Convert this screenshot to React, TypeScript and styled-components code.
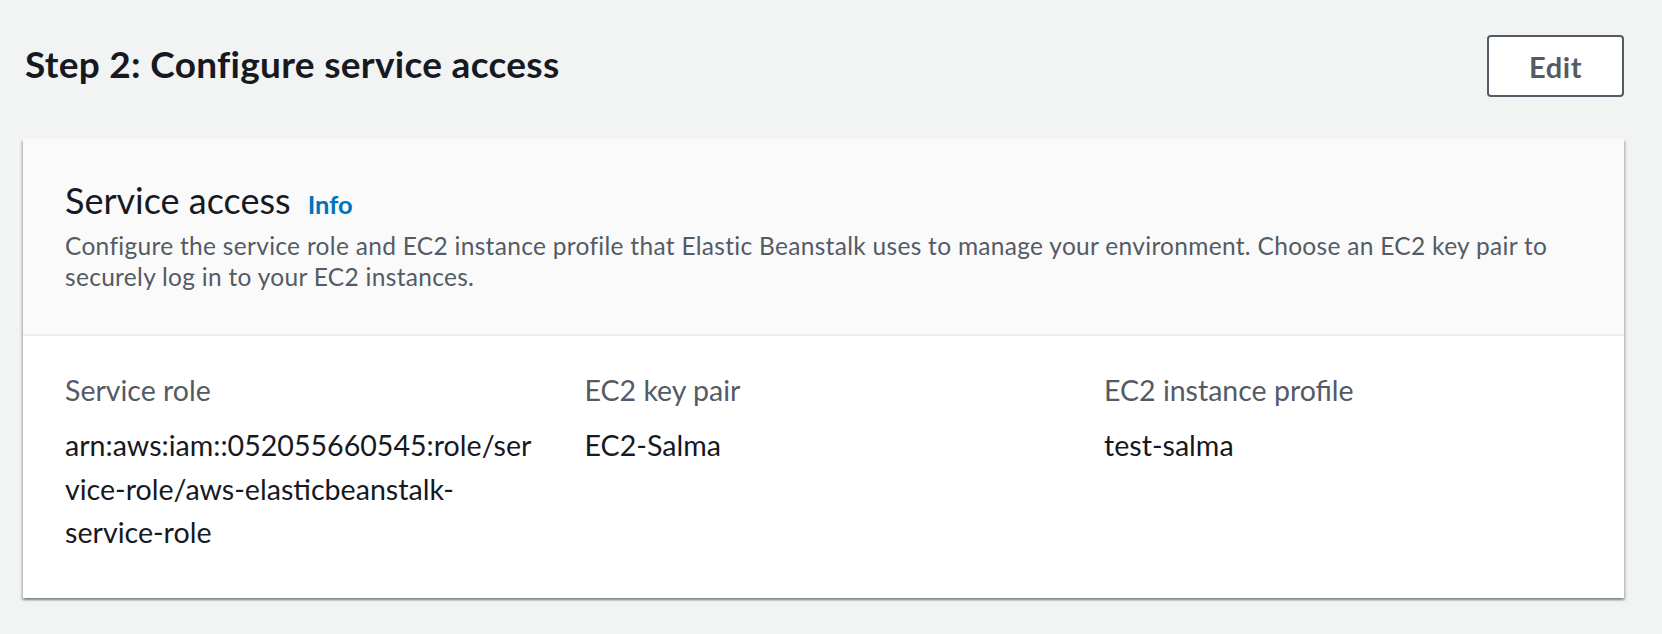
import React from "react";
import styled, { createGlobalStyle } from "styled-components";

const GlobalStyle = createGlobalStyle`
  html, body {
    margin: 0;
    padding: 0;
    background: #f2f3f3;
  }
  body {
    font-family: Lato, "Open Sans", Arial, sans-serif;
    color: #16191f;
    -webkit-font-smoothing: antialiased;
  }
`;

const Page = styled.div`
  padding: 35px 38px 40px 23px;
`;

const HeaderRow = styled.div`
  display: flex;
  justify-content: space-between;
  align-items: flex-start;
  margin-bottom: 42px;
`;

const PageTitle = styled.h1`
  margin: 7px 0 0 2px;
  font-size: 37px;
  line-height: 44px;
  letter-spacing: 0.3px;
  font-weight: 700;
  color: #16191f;
`;

const EditButton = styled.button`
  box-sizing: border-box;
  width: 137px;
  height: 62px;
  border: 2px solid #545b64;
  border-radius: 4px;
  background: #ffffff;
  color: #545b64;
  font-family: Lato, "Open Sans", Arial, sans-serif;
  font-size: 29px;
  letter-spacing: 0.6px;
  font-weight: 700;
  cursor: pointer;
`;

const Card = styled.section`
  background: #ffffff;
  box-shadow: 0 2px 2px 0 rgba(0, 28, 36, 0.3), 2px 2px 2px 0 rgba(0, 28, 36, 0.15),
    -2px 2px 2px 0 rgba(0, 28, 36, 0.15);
`;

const CardHeader = styled.header`
  background: #fafafa;
  padding: 39px 42px 42px 42px;
  border-bottom: 2px solid #eaeded;
`;

const CardTitle = styled.h2`
  margin: 0;
  font-size: 36px;
  line-height: 44px;
  font-weight: 400;
  color: #16191f;
`;

const InfoLink = styled.a`
  margin-left: 17px;
  font-size: 25.5px;
  line-height: 1;
  font-weight: 700;
  color: #0073bb;
  text-decoration: none;
`;

const Description = styled.p`
  margin: 8px 0 0 0;
  font-size: 24.5px;
  letter-spacing: 0.3px;
  line-height: 31px;
  color: #545b64;
`;

const CardBody = styled.div`
  padding: 36px 42px 43px 42px;
  display: grid;
  grid-template-columns: repeat(3, 470px);
  column-gap: 49.5px;
`;

const Field = styled.div`
  display: flex;
  flex-direction: column;
  gap: 16px;
  min-width: 0;
`;

const Label = styled.div`
  font-size: 28.5px;
  line-height: 36px;
  color: #545b64;
`;

const Value = styled.div`
  font-size: 28.6px;
  line-height: 43.6px;
  color: #16191f;
  overflow-wrap: break-word;
`;

const fields = [
  {
    label: "Service role",
    value: "arn:aws:iam::052055660545:role/service-role/aws-elasticbeanstalk-service-role",
  },
  { label: "EC2 key pair", value: "EC2-Salma" },
  { label: "EC2 instance profile", value: "test-salma" },
];

export default function App() {
  return (
    <>
      <GlobalStyle />
      <Page>
        <HeaderRow>
          <PageTitle>Step 2: Configure service access</PageTitle>
          <EditButton>Edit</EditButton>
        </HeaderRow>
        <Card>
          <CardHeader>
            <CardTitle>
              Service access
              <InfoLink href="#">Info</InfoLink>
            </CardTitle>
            <Description>
              Configure the service role and EC2 instance profile that Elastic Beanstalk uses to
              manage your environment. Choose an EC2 key pair to securely log in to your EC2
              instances.
            </Description>
          </CardHeader>
          <CardBody>
            {fields.map((f) => (
              <Field key={f.label}>
                <Label>{f.label}</Label>
                <Value>{f.value}</Value>
              </Field>
            ))}
          </CardBody>
        </Card>
      </Page>
    </>
  );
}
